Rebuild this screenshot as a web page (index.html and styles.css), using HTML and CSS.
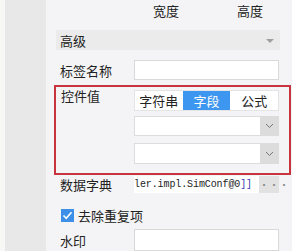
FILE: index.html
```html
<!DOCTYPE html>
<html lang="zh">
<head>
    <meta charset="UTF-8">
    <title>控件属性</title>
    <link rel="stylesheet" href="styles.css">
</head>
<body>
    <div class="layout">
        <div class="edge"></div>
        <div class="side"></div>
        <div class="panel">
            <div class="dims">
                <span class="dim">宽度</span>
                <span>高度</span>
            </div>
            <div class="group">
                <span>高级</span>
                <span class="caret"></span>
            </div>
            <div class="row label-row">
                <label>标签名称</label>
                <input class="field" type="text">
            </div>
            <div class="highlight">
                <label>控件值</label>
                <div class="value-col">
                    <div class="segment">
                        <span>字符串</span>
                        <span class="active">字段</span>
                        <span>公式</span>
                    </div>
                    <div class="select first">
                        <div class="select-text"></div>
                        <div class="select-btn">
                            <svg width="9" height="6" viewBox="0 0 9 6"><path d="M1 1 L4.5 4.5 L8 1" fill="none" stroke="#777" stroke-width="1"/></svg>
                        </div>
                    </div>
                    <div class="select second">
                        <div class="select-text"></div>
                        <div class="select-btn">
                            <svg width="9" height="6" viewBox="0 0 9 6"><path d="M1 1 L4.5 4.5 L8 1" fill="none" stroke="#777" stroke-width="1"/></svg>
                        </div>
                    </div>
                </div>
            </div>
            <div class="row dict-row">
                <label>数据字典</label>
                <div class="dict">
                    <span class="dict-text">ler.impl.SimConf@0<em>]]</em></span>
                    <span class="dict-btn">···</span>
                </div>
            </div>
            <div class="check-row">
                <span class="checkbox">
                    <svg width="13" height="13" viewBox="0 0 13 13"><path d="M2.5 6.5 L5.2 9.3 L10.5 3.2" fill="none" stroke="#fff" stroke-width="1.6"/></svg>
                </span>
                <span>去除重复项</span>
            </div>
            <div class="row mark-row">
                <label>水印</label>
                <input class="field" type="text">
            </div>
        </div>
    </div>
</body>
</html>
```
FILE: styles.css
```css
body {
    margin: 0;
    font-family: "Noto Sans CJK SC", "Noto Sans", sans-serif;
    font-size: 13px;
    color: #222;
    background-color: #f4f4f6;
    overflow: hidden;
}
.layout {
    display: flex;
    height: 251px;
}
.edge {
    flex-shrink: 0;
    width: 5px;
    background-color: #f7f7f5;
}
.side {
    flex-shrink: 0;
    width: 41px;
    background-color: #e8e8e8;
}
.panel {
    flex: 1;
    min-width: 0;
    background-color: #f4f4f6;
    padding-left: 8px;
}
.dims {
    height: 30px;
    display: flex;
    padding-left: 99px;
    line-height: 22px;
}
.dims .dim {
    width: 84px;
    flex-shrink: 0;
}
.group {
    margin-left: 2px;
    width: 220px;
    height: 20px;
    background-color: #ebebeb;
    display: flex;
    align-items: center;
    justify-content: space-between;
    padding-left: 4px;
}
.caret {
    width: 0;
    height: 0;
    border-left: 4px solid transparent;
    border-right: 4px solid transparent;
    border-top: 4px solid #a0a0a0;
    margin-right: 6px;
    margin-top: 2px;
}
.row {
    display: flex;
    align-items: center;
}
.row label {
    width: 74px;
    flex-shrink: 0;
    padding-left: 6px;
}
.field {
    width: 145px;
    height: 20px;
    box-sizing: border-box;
    border: 1px solid #d9d9d9;
    background-color: #fff;
    margin: 0;
    padding: 0;
}
.label-row {
    margin-top: 10px;
    height: 20px;
}
.highlight {
    margin-top: 5px;
    width: 237px;
    height: 90px;
    box-sizing: border-box;
    border: 2px solid #c8343e;
    display: flex;
}
.highlight label {
    width: 73px;
    flex-shrink: 0;
    padding-left: 5px;
    padding-top: 1px;
    line-height: 16px;
}
.value-col {
    width: 145px;
    flex-shrink: 0;
    padding-top: 3px;
}
.segment {
    display: flex;
    height: 21px;
    background-color: #fff;
    box-sizing: border-box;
    border: 1px solid #e4e4e4;
}
.segment span {
    flex: 1;
    text-align: center;
    line-height: 19px;
}
.segment .active {
    background-color: #3d96ef;
    color: #fff;
}
.select {
    display: flex;
    background-color: #fff;
    box-sizing: border-box;
    border: 1px solid #dcdcdc;
}
.select.first {
    margin-top: 5px;
    height: 20px;
}
.select.second {
    margin-top: 7px;
    height: 21px;
}
.select-text {
    flex: 1;
}
.select-btn {
    width: 18px;
    background-color: #dcdcdc;
    display: flex;
    align-items: center;
    justify-content: center;
}
.dict-row {
    margin-top: 1px;
    height: 17px;
}
.dict {
    width: 145px;
    flex-shrink: 0;
    height: 17px;
    display: flex;
}
.dict-text {
    flex: 1;
    min-width: 0;
    background-color: #fff;
    font-family: "Liberation Mono", monospace;
    font-size: 10px;
    line-height: 17px;
    letter-spacing: -0.1px;
    white-space: nowrap;
    overflow: hidden;
}
.dict-text em {
    font-style: normal;
    color: #3b3bb0;
}
.dict-btn {
    width: 20px;
    flex-shrink: 0;
    background-color: #e2e2e2;
    color: #888;
    text-align: center;
    font-size: 10px;
    line-height: 17px;
}
.check-row {
    margin-top: 15px;
    height: 15px;
    display: flex;
    align-items: center;
    padding-left: 7px;
}
.checkbox {
    width: 13px;
    height: 13px;
    flex-shrink: 0;
    background-color: #3d8fe8;
    display: flex;
    margin-right: 4px;
}
.mark-row {
    margin-top: 6px;
    height: 22px;
}
.mark-row .field {
    height: 22px;
}
```
